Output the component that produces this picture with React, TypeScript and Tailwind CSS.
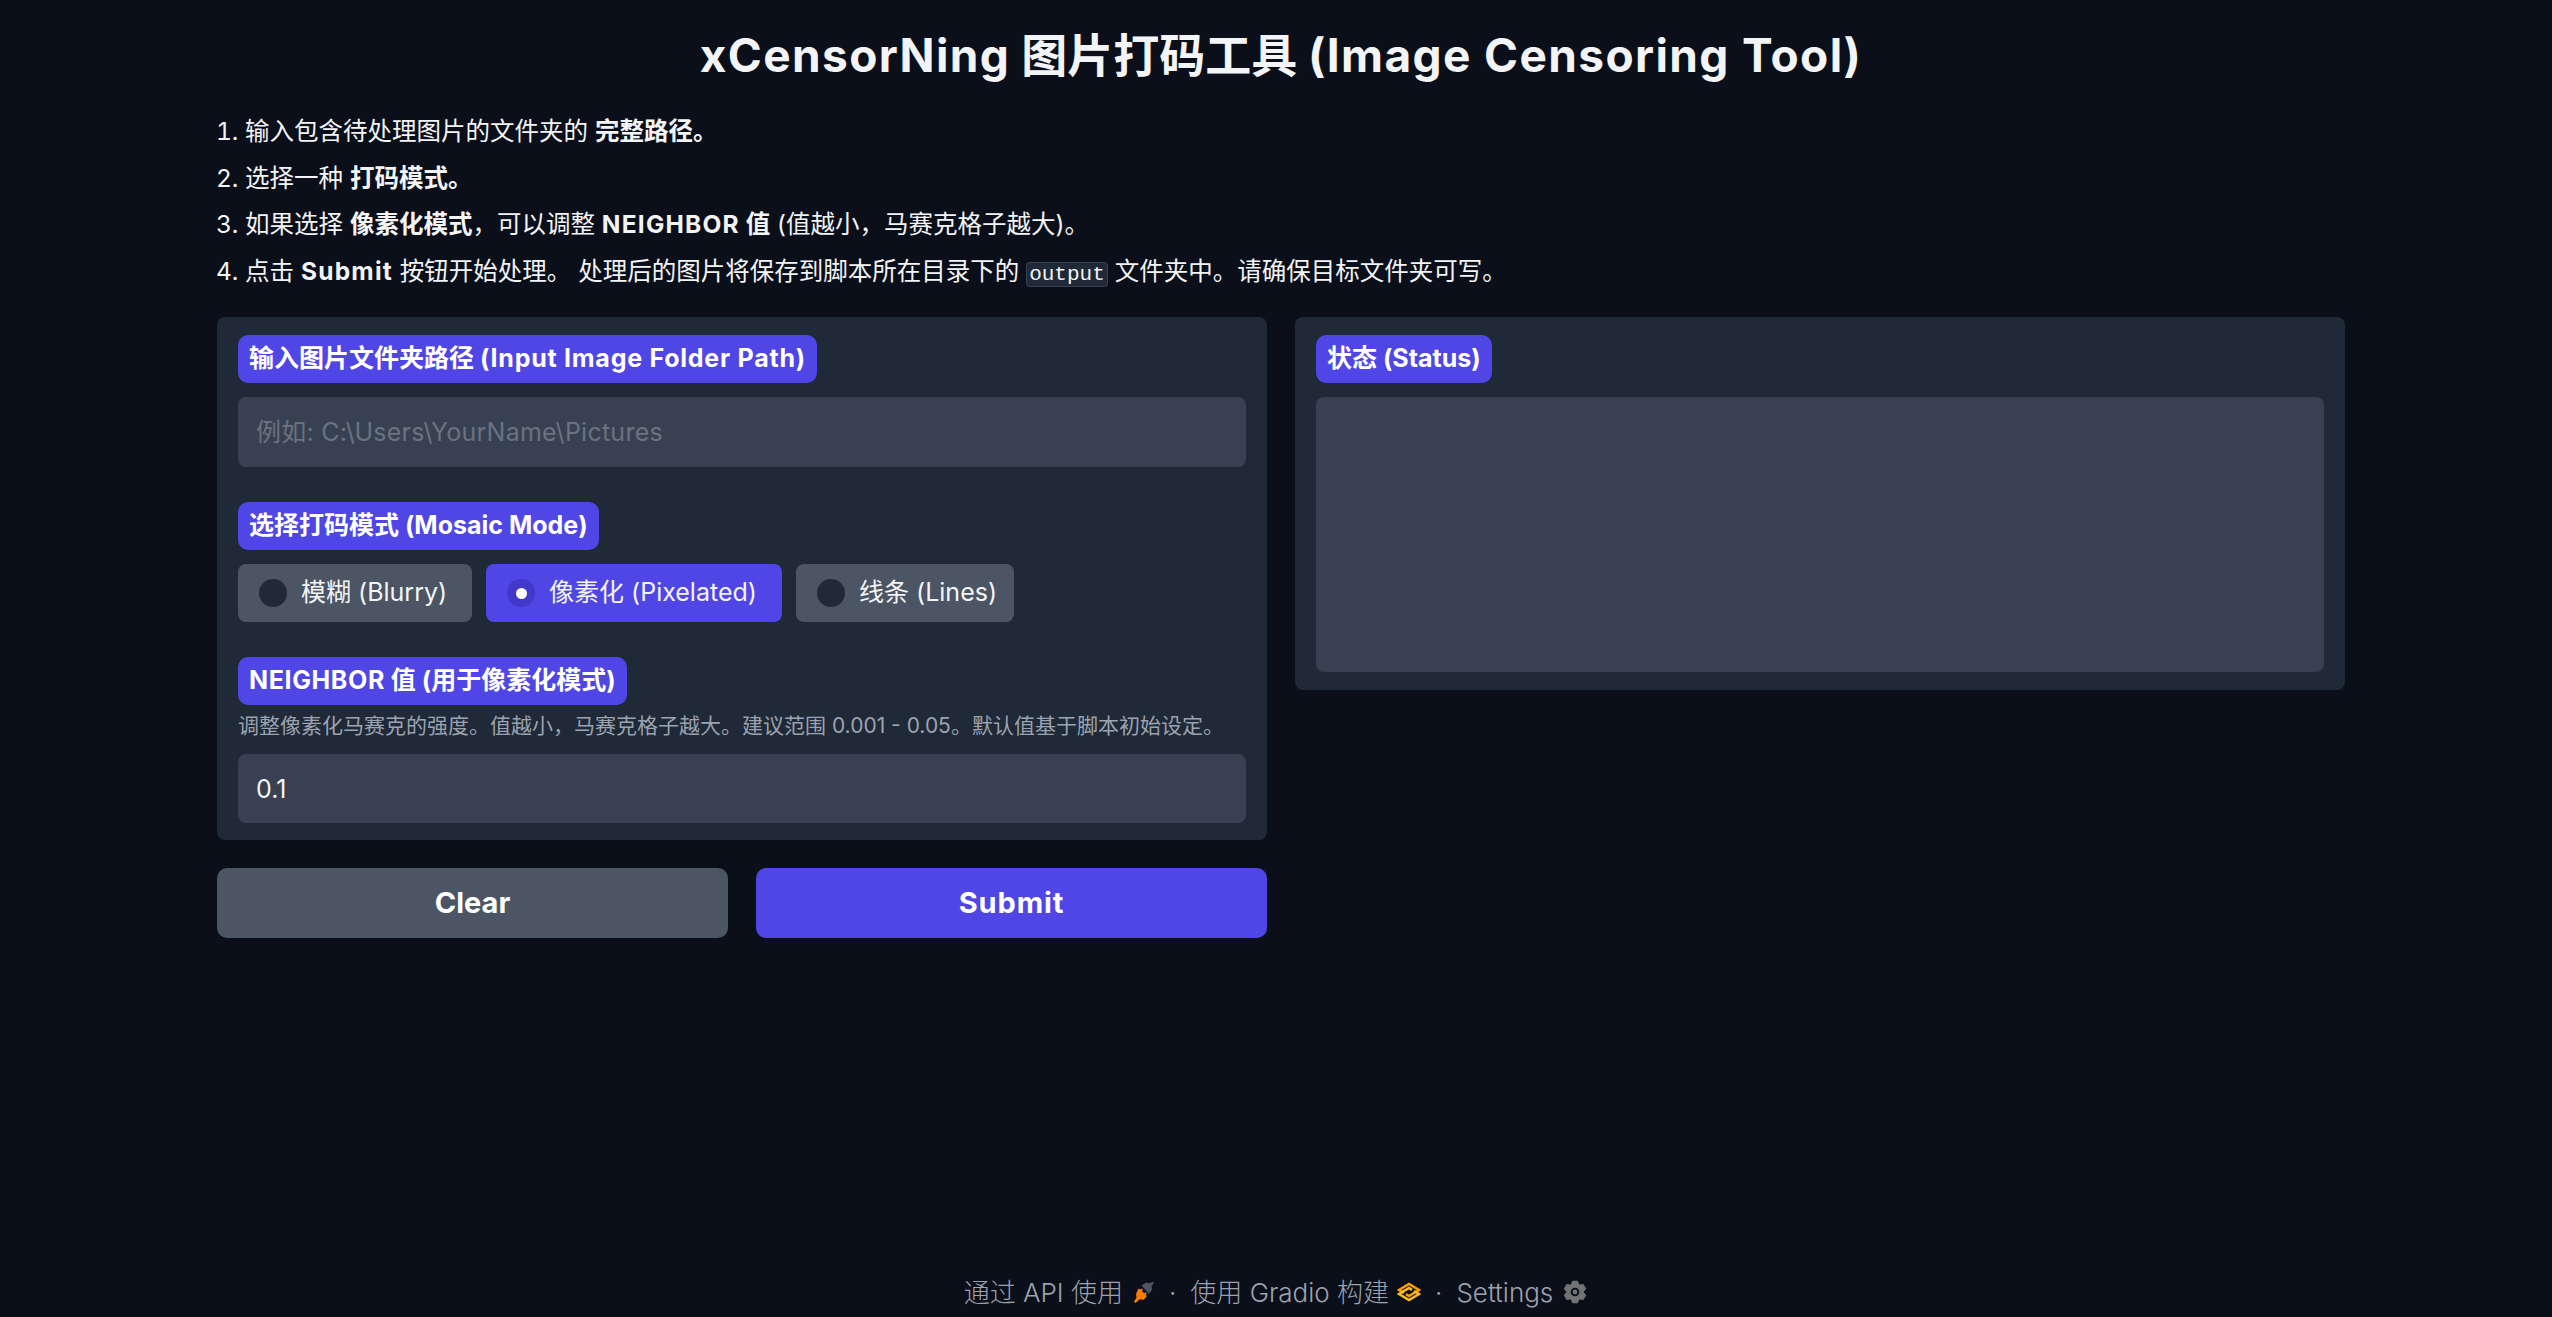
import { useState, type ReactNode } from "react";

const sans = "font-['Inter','Noto_Sans_CJK_SC',sans-serif]";

// Latin runs sit a bit wider than the CJK ones in the original font
function L({ children, className = "tracking-[0.03em]" }: { children: ReactNode; className?: string }) {
  return <span className={className}>{children}</span>;
}

function FieldLabel({ children }: { children: ReactNode }) {
  return (
    <div className="self-start h-12 flex items-center px-[11px] rounded-[10px] bg-[#4f46e5] text-white text-[25px] font-bold whitespace-pre">
      {children}
    </div>
  );
}

function PlugIcon() {
  return (
    <svg width="22" height="22" viewBox="0 0 22 22" className="ml-[10px]">
      <path d="M8.500 4.500L13 1.500l3 .8L20 .8l1 1-2.500 3.500.8 3-3.300 4.700z" fill="#4b5563" />
      <path d="M5.500 7.500l2 1 1.500-1 1 1-1.200 1.500 2.500 2.200 1.500-1 1 1-1 1.500 1 1.500-3 3.500-4-.5L2.500 22 1 20.500l2.500-3.800L3 13z" fill="#ff7c00" />
    </svg>
  );
}

function GradioIcon() {
  return (
    <svg width="24" height="20" viewBox="0 0 24 20" fill="none" strokeWidth="2.600" className="ml-[8px]">
      <path d="M7 11L2 8l10-6 10 6-10 6-3-1.800" stroke="#ff9d00" />
      <path d="M17 9l5 3-10 6-10-6 10-6 3 1.800" stroke="#fbbf24" />
    </svg>
  );
}

function GearIcon() {
  const points: string[] = [];
  for (let i = 0; i < 6; i++) {
    const a = ((i * 60 - 90) * Math.PI) / 180;
    [[-0.5, 8], [-0.24, 10.8], [0.24, 10.8], [0.5, 8]].forEach(([off, r]) => {
      points.push(`${(12 + r * Math.cos(a + off)).toFixed(2)} ${(12 + r * Math.sin(a + off)).toFixed(2)}`);
    });
  }
  return (
    <svg width="26" height="26" viewBox="0 0 24 24" className="ml-[9px]">
      <path
        fillRule="evenodd"
        fill="#737373"
        d={`M${points.join("L")}zM12 8a4 4 0 1 0 0 8 4 4 0 0 0 0-8z`}
      />
      <circle cx="12" cy="12" r="2.200" fill="#737373" />
    </svg>
  );
}

export default function App() {
  const [mode, setMode] = useState("pixelated");
  const modes = [
    { id: "blurry", label: "模糊", latin: "(Blurry)", width: "w-[234px]" },
    { id: "pixelated", label: "像素化", latin: "(Pixelated)", width: "w-[296px]" },
    { id: "lines", label: "线条", latin: "(Lines)", width: "w-[218px]" },
  ];

  return (
    <div className={`min-h-[1317px] bg-[#0b0f19] flex flex-col text-[#f3f4f6] ${sans}`}>
      <main className="w-[2128px] ml-[217px] flex-1">
        <h1 className="text-center text-[46px] font-bold leading-[56px] pt-[27px] pb-px text-[#f3f4f6] whitespace-pre">
          <L>xCensorNing</L> 图片打码工具 <L>(Image Censoring Tool)</L>
        </h1>

        <ol className="list-decimal pl-[28px] mt-[24px] text-[24.5px] leading-[46.500px]">
          <li>输入包含待处理图片的文件夹的 <b>完整路径。</b></li>
          <li>选择一种 <b>打码模式。</b></li>
          <li>如果选择 <b>像素化模式</b>，可以调整 <b><L className="tracking-[0.05em]">NEIGHBOR</L> 值</b> (值越小，马赛克格子越大)。</li>
          <li>
            点击 <b><L className="tracking-[0.05em]">Submit</L></b> 按钮开始处理。 处理后的图片将保存到脚本所在目录下的{" "}
            <code className="font-['Liberation_Mono',monospace] text-[21px] leading-none bg-[#1f2937] border border-[#374151] rounded-[4px] px-[2px]">output</code>{" "}
            文件夹中。请确保目标文件夹可写。
          </li>
        </ol>

        <div className="grid grid-cols-2 gap-7 mt-[23px] items-start">
          <div className="flex flex-col gap-7">
            <section className="bg-[#1f2937] rounded-lg px-[21px] pt-[18px] pb-[17px] flex flex-col">
              <FieldLabel>输入图片文件夹路径 <L>(Input Image Folder Path)</L></FieldLabel>
              <input
                placeholder="例如: C:\Users\YourName\Pictures"
                className="mt-[14px] h-[70px] rounded-lg bg-[#374151] px-[18px] text-[25px] tracking-[0.01em] outline-none placeholder:text-[#6b7280]"
              />

              <div className="mt-[35px] flex flex-col">
                <FieldLabel>选择打码模式 (Mosaic Mode)</FieldLabel>
                <div className="mt-[14px] flex gap-[14px]">
                  {modes.map((m) => {
                    const active = mode === m.id;
                    return (
                      <button
                        key={m.id}
                        onClick={() => setMode(m.id)}
                        className={`h-[58px] pl-[21px] rounded-lg flex items-center gap-[14px] text-[25px] whitespace-pre ${m.width} ${active ? "bg-[#4f46e5]" : "bg-[#4b5563]"}`}
                      >
                        <span className={`w-[28px] h-[28px] rounded-full flex items-center justify-center ${active ? "bg-[#4338ca]" : "bg-[#1f2937]"}`}>
                          {active && <span className="w-[11px] h-[11px] rounded-full bg-white" />}
                        </span>
                        <span>{m.label} {m.latin}</span>
                      </button>
                    );
                  })}
                </div>
              </div>

              <div className="mt-[35px] flex flex-col">
                <FieldLabel><L className="tracking-[0.025em]">NEIGHBOR</L> 值 (用于像素化模式)</FieldLabel>
                <p className="mt-[5px] text-[21px] leading-[32px] text-[#9ca3af] whitespace-nowrap">
                  调整像素化马赛克的强度。值越小，马赛克格子越大。建议范围 0.001 - 0.05。默认值基于脚本初始设定。
                </p>
                <input
                  defaultValue="0.1"
                  className="mt-[12px] h-[69px] rounded-lg bg-[#374151] px-[18px] text-[25px] outline-none"
                />
              </div>
            </section>

            <div className="grid grid-cols-2 gap-7">
              <button className="h-[70px] rounded-[10px] bg-[#4b5563] text-white text-[29px] font-bold">Clear</button>
              <button className="h-[70px] rounded-[10px] bg-[#4f46e5] text-white text-[29px] font-bold tracking-[0.03em]">Submit</button>
            </div>
          </div>

          <section className="bg-[#1f2937] rounded-lg px-[21px] pt-[18px] pb-[18px] flex flex-col">
            <FieldLabel>状态 (Status)</FieldLabel>
            <textarea readOnly className="mt-[14px] h-[275px] rounded-lg bg-[#374151] resize-none outline-none" />
          </section>
        </div>
      </main>

      <footer className="h-[50px] flex items-center justify-center text-[26px] font-light text-[#9ca3af]">
        <span>通过 API 使用</span>
        <PlugIcon />
        <span className="mx-[14px]">·</span>
        <span>使用 Gradio 构建</span>
        <GradioIcon />
        <span className="mx-[14px]">·</span>
        <span>Settings</span>
        <GearIcon />
      </footer>
    </div>
  );
}
